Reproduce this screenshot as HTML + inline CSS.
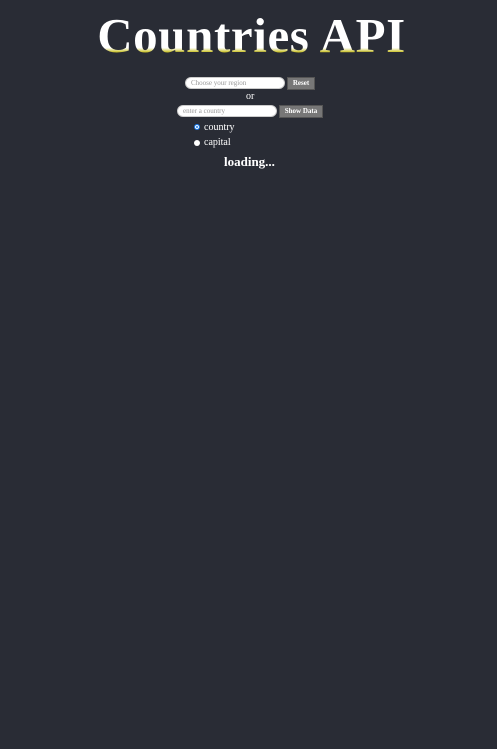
<!DOCTYPE html>
<html><head><style>
body{margin:0;background:#292c35;width:497px;height:749px;font-family:"Liberation Serif",serif;color:#fff;position:relative;overflow:hidden}
h1{position:absolute;left:3px;width:497px;top:9px;margin:0;text-align:center;font-size:49px;font-weight:bold;letter-spacing:0.6px;
background:linear-gradient(#fff 0,#fff 72%,#c8c020 80%,#e0cc10 100%);-webkit-background-clip:text;color:transparent;line-height:54px}
.inp{position:absolute;background:#fff;border-radius:6px;height:10px;font-size:7px;color:#999;padding-left:5px;line-height:10px;border:1px solid #ccc}
.btn{position:absolute;background:#777;color:#fff;font-size:7px;font-weight:bold;height:11px;line-height:11px;text-align:center;border:1px solid #555}
.t{position:absolute;font-size:10px}
.r{position:absolute;width:6px;height:6px;border-radius:50%;background:#fff}
</style></head><body>
<h1>Countries API</h1>
<div class="inp" style="left:185px;top:77px;width:93px">Choose your region</div>
<div class="btn" style="left:287px;top:77px;width:26px">Reset</div>
<div class="t" style="left:246px;top:91px">or</div>
<div class="inp" style="left:177px;top:105px;width:93px">enter a country</div>
<div class="btn" style="left:279px;top:105px;width:42px">Show Data</div>
<div class="r" style="left:194px;top:124px;border:1px solid #1a7ae8;width:4px;height:4px;box-shadow:inset 0 0 0 1px #fff;background:#1a7ae8"></div>
<div class="t" style="left:204px;top:122px">country</div>
<div class="r" style="left:194px;top:140px"></div>
<div class="t" style="left:204px;top:137px">capital</div>
<div class="t" style="left:224px;top:154px;font-size:13px;font-weight:bold">loading...</div>
</body></html>
